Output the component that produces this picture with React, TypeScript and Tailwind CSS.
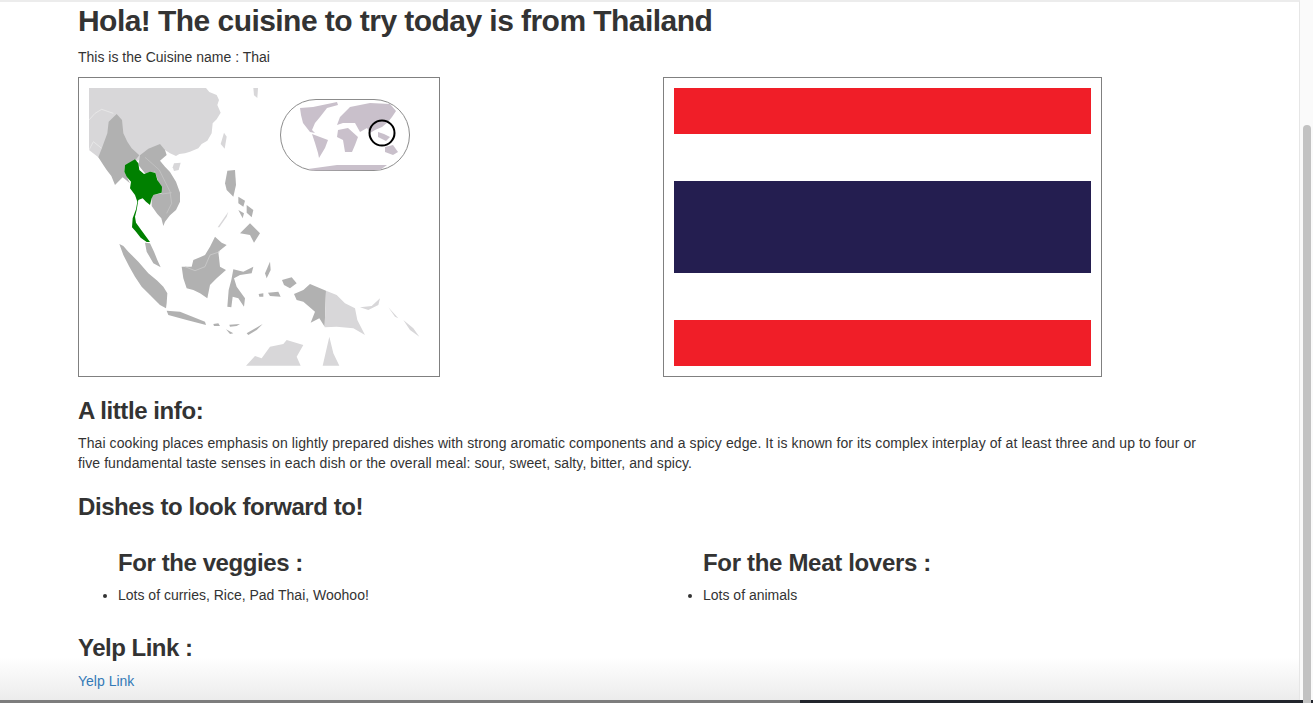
const LIGHT = "#d8d7d9";
const GRAY = "#b1b1b1";
const GREEN = "#008000";
const WORLD = "#c9c0cb";

function RegionMap() {
  return (
    <svg viewBox="57 54 1020 834" className="block w-[340px] h-[278px] blur-[0.4px]">
      {/* china + india, myanmar sits on top */}
      <path fill={LIGHT} d="M57 54 L408 54 L418 66 L440 75 L447 90 L442 105 L452 128 L440 148 L428 160 L425 190 L412 212 L395 222 L385 235 L360 245 L345 250 L328 252 L318 258 L300 250 L285 240 L240 250 L208 270 L120 300 L85 262 L57 240Z" />
      <path fill={LIGHT} d="M462 188 L470 200 L464 236 L452 222Z" />
      <path fill={LIGHT} d="M312 280 L332 278 L326 300 L312 303 L308 292Z" />
      <path fill={LIGHT} d="M550 54 L564 54 L562 84 L552 76Z" />
      <path fill="none" stroke="#eeeeee" strokeWidth="2" d="M57 150 L75 130 L95 118 L130 130" />
      <path fill="none" stroke="#eeeeee" strokeWidth="2" d="M57 240 L70 215 L95 235" />
      {/* myanmar */}
      <path fill={GRAY} d="M140 132 L156 150 L160 190 L172 215 L185 235 L208 256 L198 268 L165 285 L163 305 L180 340 L158 322 L135 345 L124 318 L110 300 L100 285 L85 262 L95 236 L112 190 L116 155Z" />
      {/* laos vietnam cambodia */}
      <path fill={GRAY} d="M210 256 L235 236 L270 222 L285 240 L290 255 L270 272 L285 290 L300 306 L318 335 L330 368 L330 395 L318 420 L300 436 L285 455 L280 468 L274 445 L262 432 L245 408 L245 376 L276 370 L255 305 L225 310 L205 285Z" />
      <path fill="none" stroke="#c8c8c8" strokeWidth="2" d="M225 262 L240 275 L268 300 L300 365 L305 400 L290 430" />
      <path fill="none" stroke="#c8c8c8" strokeWidth="2" d="M276 372 L305 368" />
      {/* thailand */}
      <path fill={GREEN} d="M195 268 L205 280 L208 300 L222 312 L240 305 L256 308 L262 330 L276 350 L275 368 L250 375 L245 385 L240 405 L228 395 L218 385 L205 390 L200 420 L195 440 L198 458 L212 478 L240 516 L230 516 L212 503 L198 485 L186 472 L188 445 L198 418 L202 395 L195 375 L180 355 L183 335 L170 320 L163 305 L165 285Z" />
      {/* malaysia + sumatra */}
      <path fill={GRAY} d="M225 518 L240 520 L252 545 L262 570 L272 592 L250 580 L230 545Z" />
      <path fill={GRAY} d="M148 522 L160 528 L175 545 L205 575 L235 610 L262 632 L280 650 L292 670 L290 700 L288 715 L270 705 L240 675 L215 650 L195 620 L178 590 L160 555Z" />
      {/* borneo */}
      <path fill={GRAY} d="M335 590 L365 590 L370 570 L390 562 L405 555 L420 530 L435 500 L455 518 L470 525 L445 545 L450 590 L468 600 L440 625 L420 645 L412 685 L390 670 L370 660 L350 655 L340 625Z" />
      <path fill="none" stroke="#d0d0d0" strokeWidth="2" d="M345 590 L375 602 L405 590 L420 555 L450 545" />
      {/* sulawesi */}
      <path fill={GRAY} d="M490 598 L520 605 L550 590 L545 610 L510 615 L492 625 L500 650 L525 685 L522 710 L505 685 L488 680 L484 712 L472 710 L476 660 L484 630Z" />
      {/* philippines */}
      <path fill={GRAY} d="M472 302 L495 300 L498 345 L490 380 L470 360 L465 340Z" />
      <path fill={GRAY} d="M505 380 L525 392 L520 410 L505 400Z M530 405 L550 420 L545 442 L530 428Z M505 420 L522 430 L518 445Z" />
      <path fill={GRAY} d="M510 490 L540 460 L570 490 L552 518 L540 495Z" />
      <path fill={LIGHT} d="M443 472 L475 425 L470 440 L448 472Z" />
      {/* java + islands */}
      <path fill={GRAY} d="M290 722 L330 725 L405 755 L408 765 L350 750 L295 735Z" />
      <path fill={GRAY} d="M430 762 L445 760 L450 768 L432 768Z M478 764 L510 762 L500 768 L480 770Z" />
      <path fill={GRAY} d="M530 790 L578 762 L560 780 L535 795Z" />
      <path fill={GRAY} d="M468 778 L490 790 L480 792Z" />
      <path fill={GRAY} d="M566 672 L580 670 L580 680 L568 680Z M594 668 L625 665 L632 680 L600 678Z" />
      <path fill={GRAY} d="M636 630 L665 622 L680 640 L660 655 L642 645Z" />
      <path fill={GRAY} d="M585 610 L600 575 L602 600 L590 625Z" />
      {/* new guinea */}
      <path fill={GRAY} d="M672 672 L700 660 L720 642 L768 662 L764 770 L748 745 L722 758 L735 725 L700 695 L680 690Z" />
      <path fill={LIGHT} d="M768 662 L800 675 L825 700 L855 715 L862 750 L885 795 L850 775 L800 770 L764 772Z" />
      <path fill={LIGHT} d="M870 712 L905 708 L930 685 L925 705 L895 720Z" />
      {/* australia */}
      <path fill={LIGHT} d="M528 887 L555 858 L575 865 L600 830 L640 822 L650 810 L700 825 L680 860 L692 887Z" />
      <path fill={LIGHT} d="M758 887 L778 800 L790 850 L808 887Z" />
      <path fill={LIGHT} d="M955 712 L985 745 L975 740Z M1000 750 L1030 775 L1048 800 L1020 780Z" />
    </svg>
  );
}

function WorldInset() {
  return (
    <svg viewBox="0 0 130 72" className="absolute left-[201px] top-[21px] w-[130px] h-[72px] blur-[0.3px]">
      <rect x="0.5" y="0.5" width="129" height="71" rx="35.5" ry="35.5" fill="#fff" stroke="#8c8c8c" strokeWidth="1" />
      <path fill={WORLD} d="M20 9 L33 8 L57 3 L58 6 L47 9 L40 18 L35 24 L32 31 L35 34 L30 33 L23 24 L21 16Z" />
      <path fill={WORLD} d="M32 35 L40 38 L48 41 L45 49 L42 54 L39 59 L38 54 L35 44Z" />
      <path fill={WORLD} d="M58 31 L68 29 L78 38 L75 46 L72 53 L65 53 L63 41 L57 38Z" />
      <path fill={WORLD} d="M60 18 L70 8 L90 4 L110 5 L116 12 L112 18 L108 23 L102 28 L95 31 L90 34 L87 29 L80 33 L75 24 L63 24 L57 26Z" />
      <path fill={WORLD} d="M98 33 L104 35 L110 38 L106 42 L98 38Z" />
      <path fill={WORLD} d="M105 48 L113 46 L118 53 L113 56 L105 53Z" />
      <path fill={WORLD} d="M28 70 L57 66 L107 66 L100 71 L33 71.5Z" />
      <circle cx="102" cy="34" r="12.5" fill="none" stroke="#000" strokeWidth="2" />
    </svg>
  );
}

function ThaiFlag() {
  return (
    <div className="flex flex-col w-[417px] h-[278px]">
      <div className="h-[46px] bg-[#f01e28]" />
      <div className="h-[47px] bg-white" />
      <div className="h-[92px] bg-[#241e50]" />
      <div className="h-[47px] bg-white" />
      <div className="h-[46px] bg-[#f01e28]" />
    </div>
  );
}

export default function App() {
  return (
    <div className="relative flex h-[703px] overflow-hidden bg-white text-[#333] text-[14px] leading-[20px] font-['Liberation_Sans',Arial,sans-serif]">
      {/* window's bottom edge fade + desktop peeking through */}
      <div className="absolute left-0 right-0 bottom-[3px] h-[43px] bg-gradient-to-b from-transparent to-[#ececec]" />
      <div className="absolute left-0 right-0 bottom-0 h-[3px] bg-[#7d7d7d] flex justify-end">
        <div className="w-[513px] h-[3px] bg-[#22252c]" />
      </div>

      <main className="relative flex-1 h-[700px] border-t-2 border-[#ececec] border-r border-r-[#e6e6e6] pl-[78px] pr-[81px]">
        <h1 className="text-[30px] leading-[33px] font-bold tracking-[-0.55px] mt-[2px]">
          Hola! The cuisine to try today is from Thailand
        </h1>
        <p className="mt-[10px]">This is the Cuisine name : Thai</p>

        <div className="grid grid-cols-2 gap-x-[45px] mt-[10px] w-[1125px]">
          <div className="relative w-[362px] h-[300px] border border-[#808080] p-[10px]">
            <RegionMap />
            <WorldInset />
          </div>
          <div className="w-[439px] h-[300px] border border-[#808080] p-[10px]">
            <ThaiFlag />
          </div>
        </div>

        <h3 className="text-[24px] leading-[26px] font-bold tracking-[-0.42px] mt-[21px]">A little info:</h3>
        <p className="mt-[9px] w-[1140px] tracking-[0.09px]">
          Thai cooking places emphasis on lightly prepared dishes with strong aromatic components and a spicy edge. It is
          known for its complex interplay of at least three and up to four or five fundamental taste senses in each dish or
          the overall meal: sour, sweet, salty, bitter, and spicy.
        </p>

        <h3 className="text-[24px] leading-[26px] font-bold tracking-[-0.42px] mt-[21px]">
          Dishes to look forward to!
        </h3>

        <div className="grid grid-cols-2 gap-x-[45px] mt-[30px] w-[1125px]">
          <div>
            <h3 className="text-[24px] leading-[26px] font-bold tracking-[-0.42px] pl-[40px]">For the veggies :</h3>
            <ul className="list-disc pl-[40px] mt-[9px]">
              <li>Lots of curries, Rice, Pad Thai, Woohoo!</li>
            </ul>
          </div>
          <div>
            <h3 className="text-[24px] leading-[26px] font-bold tracking-[-0.32px] pl-[40px]">For the Meat lovers :</h3>
            <ul className="list-disc pl-[40px] mt-[9px]">
              <li>Lots of animals</li>
            </ul>
          </div>
        </div>

        <h3 className="text-[24px] leading-[26px] font-bold tracking-[-0.5px] mt-[30px]">Yelp Link :</h3>
        <a href="#" className="block mt-[10px] text-[#337ab7]">
          Yelp Link
        </a>
      </main>

      <aside className="relative w-[13px] h-[700px] bg-[#fafafa] pl-[3px] pt-[125px]">
        <div className="w-[8px] h-[600px] rounded-full bg-[#c2c2c2]" />
      </aside>
    </div>
  );
}
